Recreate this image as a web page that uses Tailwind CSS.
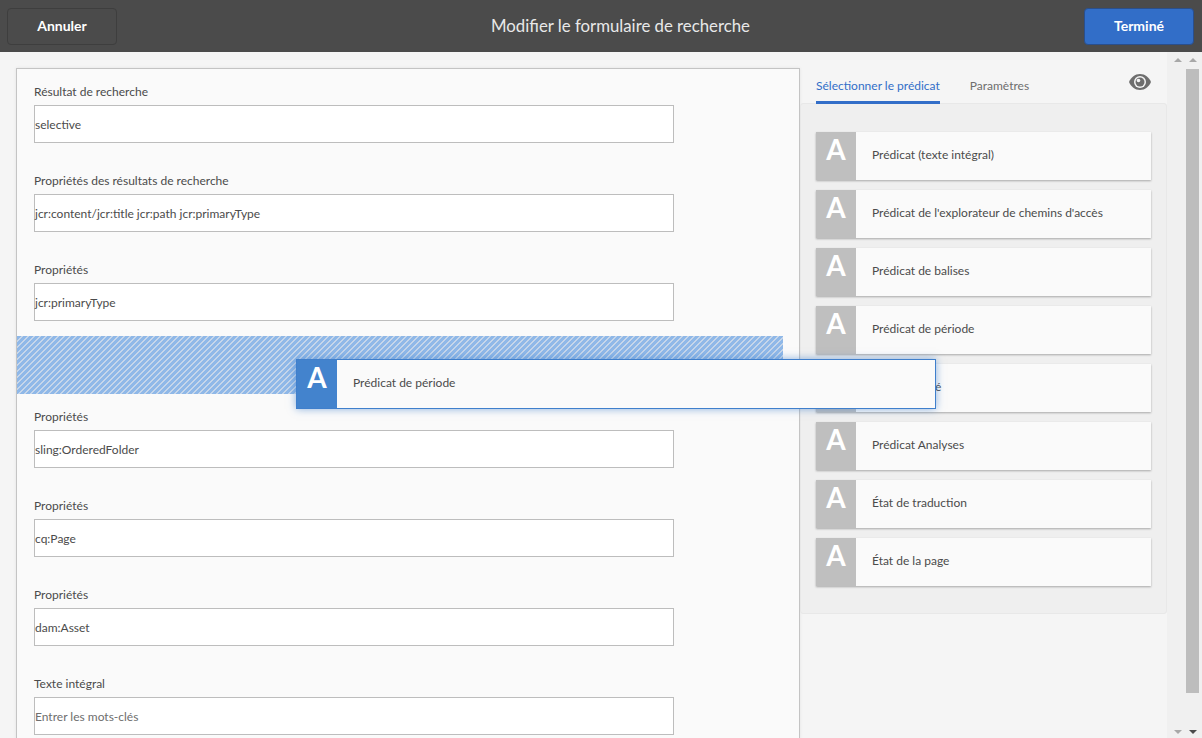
<!DOCTYPE html>
<html lang="fr">
<head>
    <meta charset="UTF-8">
    <title>Modifier le formulaire de recherche</title>
    <script src="https://cdn.jsdelivr.net/npm/@tailwindcss/browser@4"></script>
</head>
<body class="relative w-[1202px] h-[738px] overflow-hidden bg-[#f5f5f5] text-[#4b4b4b] text-[12px] font-['Lato',sans-serif]">
    <!-- barre du haut -->
    <header class="relative h-[52px] flex items-center justify-between pl-[7px] pr-2 bg-[#4b4b4b]">
        <button type="button" class="w-[110px] h-[37px] rounded-[4px] border border-[#3e3e3e] bg-[#4b4b4b] text-white text-sm font-bold">Annuler</button>
        <h1 class="absolute left-0 right-0 pl-[39px] text-center text-[16.800px] text-[#e8e8e8] pointer-events-none">Modifier le formulaire de recherche</h1>
        <button type="button" class="w-[110px] h-[37px] rounded-[4px] border border-[#2a4f8c] bg-[#326ec8] text-white text-sm font-bold">Terminé</button>
    </header>

    <main class="flex h-[686px] overflow-hidden">
        <!-- formulaire -->
        <div class="pl-4 pt-4 w-[800px] shrink-0">
            <section class="h-[700px] border border-[#c4c4c4] bg-[#fafafa] pr-4 shadow-[0_0_3px_rgba(0,0,0,0.08)]">
                <div class="pt-3 pb-[15px] pl-[17px]">
                    <label class="block h-6 leading-[22px]">Résultat de recherche</label>
                    <div class="w-[640px] h-[38px] flex items-center pt-[2px] border border-[#bdbdbd] bg-white">selective</div>
                </div>
                <div class="pt-3 pb-[15px] pl-[17px]">
                    <label class="block h-6 leading-[22px]">Propriétés des résultats de recherche</label>
                    <div class="w-[640px] h-[38px] flex items-center pt-[2px] border border-[#bdbdbd] bg-white">jcr:content/jcr:title jcr:path jcr:primaryType</div>
                </div>
                <div class="pt-3 pb-[15px] pl-[17px]">
                    <label class="block h-6 leading-[22px]">Propriétés</label>
                    <div class="w-[640px] h-[38px] flex items-center pt-[2px] border border-[#bdbdbd] bg-white">jcr:primaryType</div>
                </div>
                <div class="h-[58px] bg-[repeating-linear-gradient(135deg,#8fb8e8_0,#8fb8e8_3.240px,#c6d6ea_3.240px,#c6d6ea_4.243px)]"></div>
                <div class="pt-3 pb-[15px] pl-[17px]">
                    <label class="block h-6 leading-[22px]">Propriétés</label>
                    <div class="w-[640px] h-[38px] flex items-center pt-[2px] border border-[#bdbdbd] bg-white">sling:OrderedFolder</div>
                </div>
                <div class="pt-3 pb-[15px] pl-[17px]">
                    <label class="block h-6 leading-[22px]">Propriétés</label>
                    <div class="w-[640px] h-[38px] flex items-center pt-[2px] border border-[#bdbdbd] bg-white">cq:Page</div>
                </div>
                <div class="pt-3 pb-[15px] pl-[17px]">
                    <label class="block h-6 leading-[22px]">Propriétés</label>
                    <div class="w-[640px] h-[38px] flex items-center pt-[2px] border border-[#bdbdbd] bg-white">dam:Asset</div>
                </div>
                <div class="pt-3 pb-[15px] pl-[17px]">
                    <label class="block h-6 leading-[22px]">Texte intégral</label>
                    <div class="w-[640px] h-[38px] flex items-center pt-[2px] border border-[#bdbdbd] bg-white text-[#6e6e6e]">Entrer les mots-clés</div>
                </div>
            </section>
        </div>

        <!-- panneau latéral -->
        <aside class="w-[367px] shrink-0">
            <nav class="relative h-[52px] flex items-end gap-[30px] pl-4">
                <span class="h-[37px] border-b-[3px] border-[#326ec8] text-[#326ec8] pt-[10px]">Sélectionner le prédicat</span>
                <span class="h-[37px] pt-[10px] text-[#6e6e6e]">Paramètres</span>
                <svg class="absolute left-[329px] top-[22px] w-[22px] h-[16px]" viewBox="0 0 22 16">
                    <path fill="#6e6e6e" d="M11 0C6 0 2 3.300 0 8c2 4.700 6 8 11 8s9-3.300 11-8c-2-4.700-6-8-11-8z"/>
                    <circle cx="11" cy="8" r="6" fill="#f5f5f5"/>
                    <circle cx="11" cy="8" r="4.500" fill="#6e6e6e"/>
                    <circle cx="9.500" cy="6.500" r="1.800" fill="#f5f5f5"/>
                </svg>
            </nav>
            <div class="h-[511px] -mt-px rounded-[3px] border border-[#e8e8e8] bg-[#efefef] pt-7 pl-[15px] flex flex-col gap-[10px]">
                <div class="w-[335px] h-[48px] flex bg-[#fafafa] shadow-[0_1px_2px_rgba(0,0,0,0.3)]">
                    <span class="w-10 h-full bg-[#bfbfbf] text-white text-[28px] font-bold text-center leading-[34px]">A</span>
                    <span class="pl-4 pb-[2px] self-center">Prédicat (texte intégral)</span>
                </div>
                <div class="w-[335px] h-[48px] flex bg-[#fafafa] shadow-[0_1px_2px_rgba(0,0,0,0.3)]">
                    <span class="w-10 h-full bg-[#bfbfbf] text-white text-[28px] font-bold text-center leading-[34px]">A</span>
                    <span class="pl-4 pb-[2px] self-center">Prédicat de l'explorateur de chemins d'accès</span>
                </div>
                <div class="w-[335px] h-[48px] flex bg-[#fafafa] shadow-[0_1px_2px_rgba(0,0,0,0.3)]">
                    <span class="w-10 h-full bg-[#bfbfbf] text-white text-[28px] font-bold text-center leading-[34px]">A</span>
                    <span class="pl-4 pb-[2px] self-center">Prédicat de balises</span>
                </div>
                <div class="w-[335px] h-[48px] flex bg-[#fafafa] shadow-[0_1px_2px_rgba(0,0,0,0.3)]">
                    <span class="w-10 h-full bg-[#bfbfbf] text-white text-[28px] font-bold text-center leading-[34px]">A</span>
                    <span class="pl-4 pb-[2px] self-center">Prédicat de période</span>
                </div>
                <div class="w-[335px] h-[48px] flex bg-[#fafafa] shadow-[0_1px_2px_rgba(0,0,0,0.3)]">
                    <span class="w-10 h-full bg-[#bfbfbf] text-white text-[28px] font-bold text-center leading-[34px]">A</span>
                    <span class="pl-4 pb-[2px] self-center">Prédicat daté</span>
                </div>
                <div class="w-[335px] h-[48px] flex bg-[#fafafa] shadow-[0_1px_2px_rgba(0,0,0,0.3)]">
                    <span class="w-10 h-full bg-[#bfbfbf] text-white text-[28px] font-bold text-center leading-[34px]">A</span>
                    <span class="pl-4 pb-[2px] self-center">Prédicat Analyses</span>
                </div>
                <div class="w-[335px] h-[48px] flex bg-[#fafafa] shadow-[0_1px_2px_rgba(0,0,0,0.3)]">
                    <span class="w-10 h-full bg-[#bfbfbf] text-white text-[28px] font-bold text-center leading-[34px]">A</span>
                    <span class="pl-4 pb-[2px] self-center">État de traduction</span>
                </div>
                <div class="w-[335px] h-[48px] flex bg-[#fafafa] shadow-[0_1px_2px_rgba(0,0,0,0.3)]">
                    <span class="w-10 h-full bg-[#bfbfbf] text-white text-[28px] font-bold text-center leading-[34px]">A</span>
                    <span class="pl-4 pb-[2px] self-center">État de la page</span>
                </div>
            </div>
        </aside>

        <!-- barres de défilement -->
        <div class="flex-1 flex bg-[#f0f0f0] pl-[3px]">
            <div class="w-4 flex flex-col items-center justify-between pt-[6px] pb-[4px]">
                <span class="w-0 h-0 border-x-[4px] border-x-transparent border-b-[4px] border-b-[#a8a8a8]"></span>
                <span class="w-0 h-0 border-x-[4px] border-x-transparent border-t-[4px] border-t-[#a8a8a8]"></span>
            </div>
            <div class="w-[13px] flex flex-col items-center pt-[6px] pb-[4px]">
                <span class="w-0 h-0 border-x-[4px] border-x-transparent border-b-[4px] border-b-[#a8a8a8]"></span>
                <span class="w-[13px] h-[624px] mt-[7px] bg-[#bdbdbd]"></span>
                <span class="w-0 h-0 mt-auto border-x-[4px] border-x-transparent border-t-[4px] border-t-[#4b4b4b]"></span>
            </div>
        </div>
    </main>

    <!-- élément en cours de glissement -->
    <div class="absolute left-[296px] top-[359px] w-[640px] h-[50px] flex bg-[#fafafa] border border-[#3f7fcc] shadow-[0_0_8px_rgba(63,127,204,0.6)]">
        <span class="w-10 h-full bg-[#4383cd] text-white text-[28px] font-bold text-center leading-[34px]">A</span>
        <span class="pl-4 pb-[2px] self-center">Prédicat de période</span>
    </div>
</body>
</html>
